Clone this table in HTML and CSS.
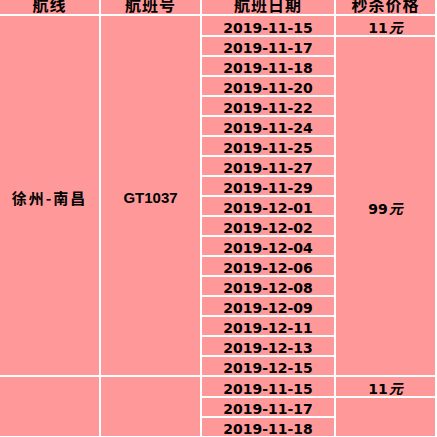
FILE: index.html
```html
<!DOCTYPE html>
<html lang="zh-CN">
<head>
<meta charset="utf-8">
<title>航班</title>
<link rel="stylesheet" href="styles.css">
</head>
<body>
<table class="flights">
  <colgroup>
    <col class="c-route">
    <col class="c-no">
    <col class="c-date">
    <col class="c-price">
  </colgroup>
  <thead>
    <tr><th>航线</th><th>航班号</th><th>航班日期</th><th>秒杀价格</th></tr>
  </thead>
  <tbody>
    <tr><td class="cn" rowspan="18">徐州-南昌</td><td class="code" rowspan="18">GT1037</td><td>2019-11-15</td><td class="price">11<span class="yuan">元</span></td></tr>
    <tr><td>2019-11-17</td><td class="price" rowspan="17">99<span class="yuan">元</span></td></tr>
    <tr><td>2019-11-18</td></tr>
    <tr><td>2019-11-20</td></tr>
    <tr><td>2019-11-22</td></tr>
    <tr><td>2019-11-24</td></tr>
    <tr><td>2019-11-25</td></tr>
    <tr><td>2019-11-27</td></tr>
    <tr><td>2019-11-29</td></tr>
    <tr><td>2019-12-01</td></tr>
    <tr><td>2019-12-02</td></tr>
    <tr><td>2019-12-04</td></tr>
    <tr><td>2019-12-06</td></tr>
    <tr><td>2019-12-08</td></tr>
    <tr><td>2019-12-09</td></tr>
    <tr><td>2019-12-11</td></tr>
    <tr><td>2019-12-13</td></tr>
    <tr><td>2019-12-15</td></tr>
    <tr><td rowspan="3"></td><td rowspan="3"></td><td>2019-11-15</td><td class="price">11<span class="yuan">元</span></td></tr>
    <tr><td>2019-11-17</td><td rowspan="2"></td></tr>
    <tr><td>2019-11-18</td></tr>
  </tbody>
</table>
</body>
</html>
```
FILE: styles.css
```css
html, body {
  margin: 0;
  padding: 0;
  background: #ffffff;
  overflow: hidden;
}

.flights {
  margin: -6px 0 0 -2px;
  width: 439px;
  table-layout: fixed;
  border-collapse: separate;
  border-spacing: 2px;
  background: #ffffff;
}

.c-route, .c-no, .c-price { width: 99px; }
.c-date { width: 132px; }

.flights th,
.flights td {
  background: #ff9999;
  color: #000000;
  text-align: center;
  vertical-align: middle;
  white-space: nowrap;
}

.flights th {
  height: 16px;
  padding: 0 0 2px;
  font: bold 16px/16px "Noto Sans CJK SC", sans-serif;
  letter-spacing: 1px;
}

.flights td {
  height: 14px;
  padding: 4px 0 0;
  font: bold 14px/14px "DejaVu Sans", sans-serif;
}

.flights td.cn {
  font: bold 15px/14px "Noto Sans CJK SC", sans-serif;
  letter-spacing: 2px;
}

.flights td.code {
  font: bold 15px/14px "Liberation Sans", sans-serif;
}

.yuan {
  font: bold 14px/14px "Noto Sans CJK SC", sans-serif;
  font-style: italic;
  margin-left: 1px;
}
```
